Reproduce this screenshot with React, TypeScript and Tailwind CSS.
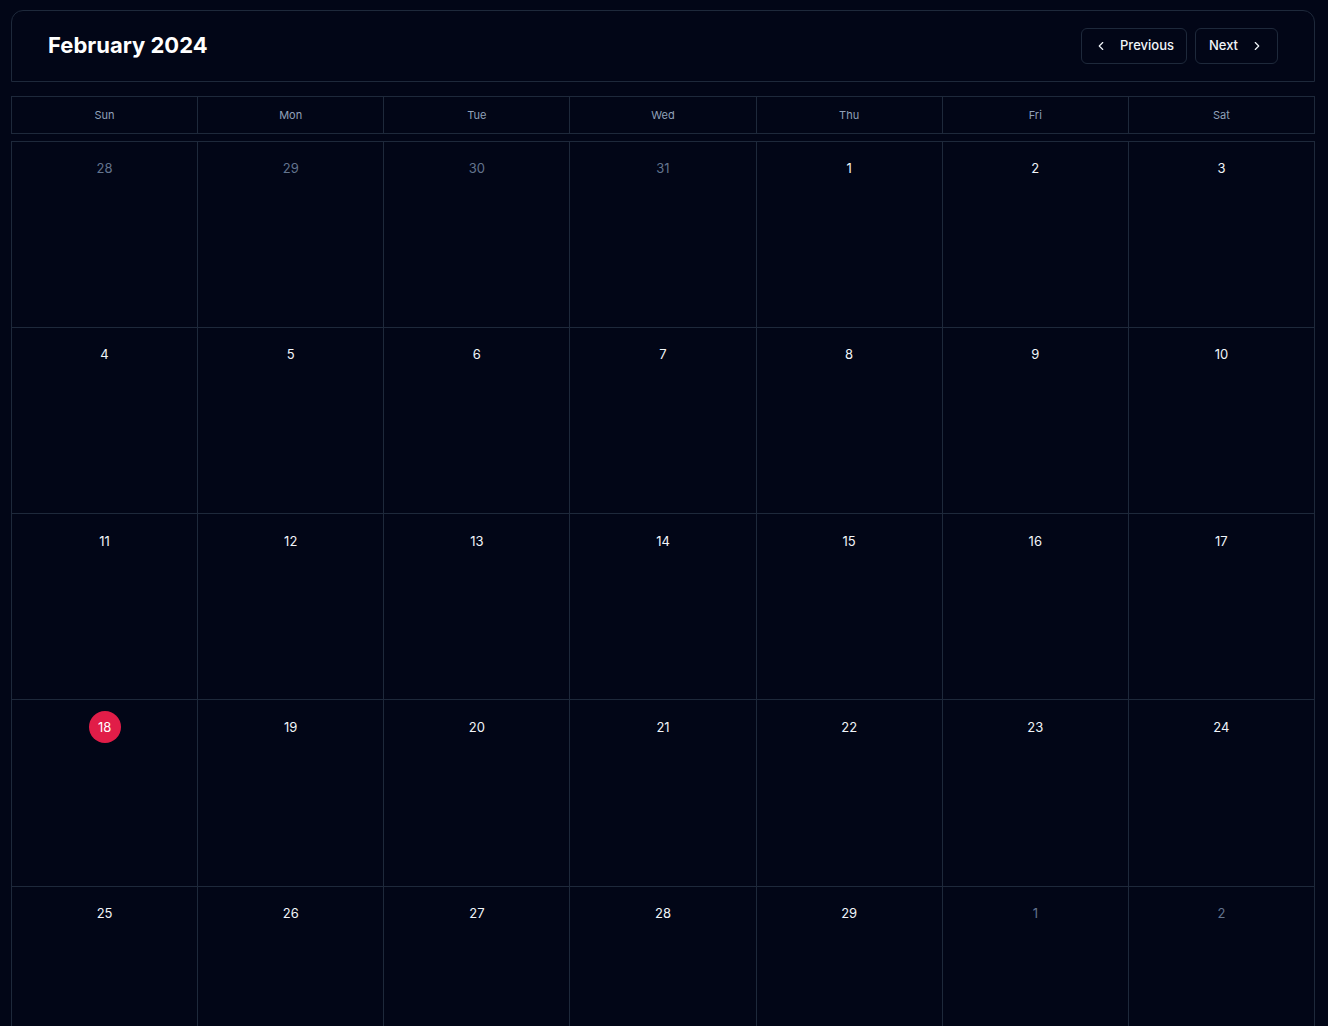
import { ChevronLeft, ChevronRight } from 'lucide-react'

const weekdays = ['Sun', 'Mon', 'Tue', 'Wed', 'Thu', 'Fri', 'Sat']

interface Day {
    n: number
    muted?: boolean
    today?: boolean
}

function buildDays(): Day[] {
    const days: Day[] = [28, 29, 30, 31].map((n) => ({ n, muted: true }))
    for (let i = 1; i <= 29; i++) days.push({ n: i, today: i === 18 })
    days.push({ n: 1, muted: true }, { n: 2, muted: true })
    return days
}

export default function App() {
    const days = buildDays()
    return (
        <div className="min-h-screen bg-[#020617] pl-[11px] pr-[13px] pt-[10px] font-['Inter',sans-serif] text-white">
            {/* header */}
            <div className="flex h-[72px] items-center justify-between rounded-t-xl border border-[#1e293b] pl-9 pr-9">
                <h1 className="-mt-0.5 text-[22px] font-bold text-white">February 2024</h1>
                <div className="flex items-center gap-2">
                    <button className="flex h-9 w-[106px] items-center justify-center gap-3 rounded-md border border-[#1e293b] text-[13px] font-medium text-slate-100">
                        <ChevronLeft className="h-3.5 w-3.5" strokeWidth={2} />
                        Previous
                    </button>
                    <button className="flex h-9 w-[83px] items-center justify-center gap-3 rounded-md border border-[#1e293b] text-[13px] font-medium text-slate-100">
                        Next
                        <ChevronRight className="h-3.5 w-3.5" strokeWidth={2} />
                    </button>
                </div>
            </div>

            {/* weekday row */}
            <div className="mt-[14px] grid grid-cols-7 border-l border-t border-[#1e293b]">
                {weekdays.map((d) => (
                    <div
                        key={d}
                        className="flex h-[37px] items-center justify-center border-b border-r border-[#1e293b] text-[11px] text-slate-400"
                    >
                        {d}
                    </div>
                ))}
            </div>

            {/* month grid */}
            <div className="mt-[7px] grid grid-cols-7 border-l border-t border-[#1e293b]">
                {days.map((d, i) => (
                    <div key={i} className="flex aspect-square justify-center border-b border-r border-[#1e293b] pt-[11px]">
                        {d.today ? (
                            <span className="flex h-8 w-8 items-center justify-center rounded-full bg-[#e11d48] text-[13px] text-white">
                                {d.n}
                            </span>
                        ) : (
                            <span
                                className={`flex h-8 items-center text-[13px] ${d.muted ? 'text-slate-500' : 'text-slate-100'}`}
                            >
                                {d.n}
                            </span>
                        )}
                    </div>
                ))}
            </div>
        </div>
    )
}
